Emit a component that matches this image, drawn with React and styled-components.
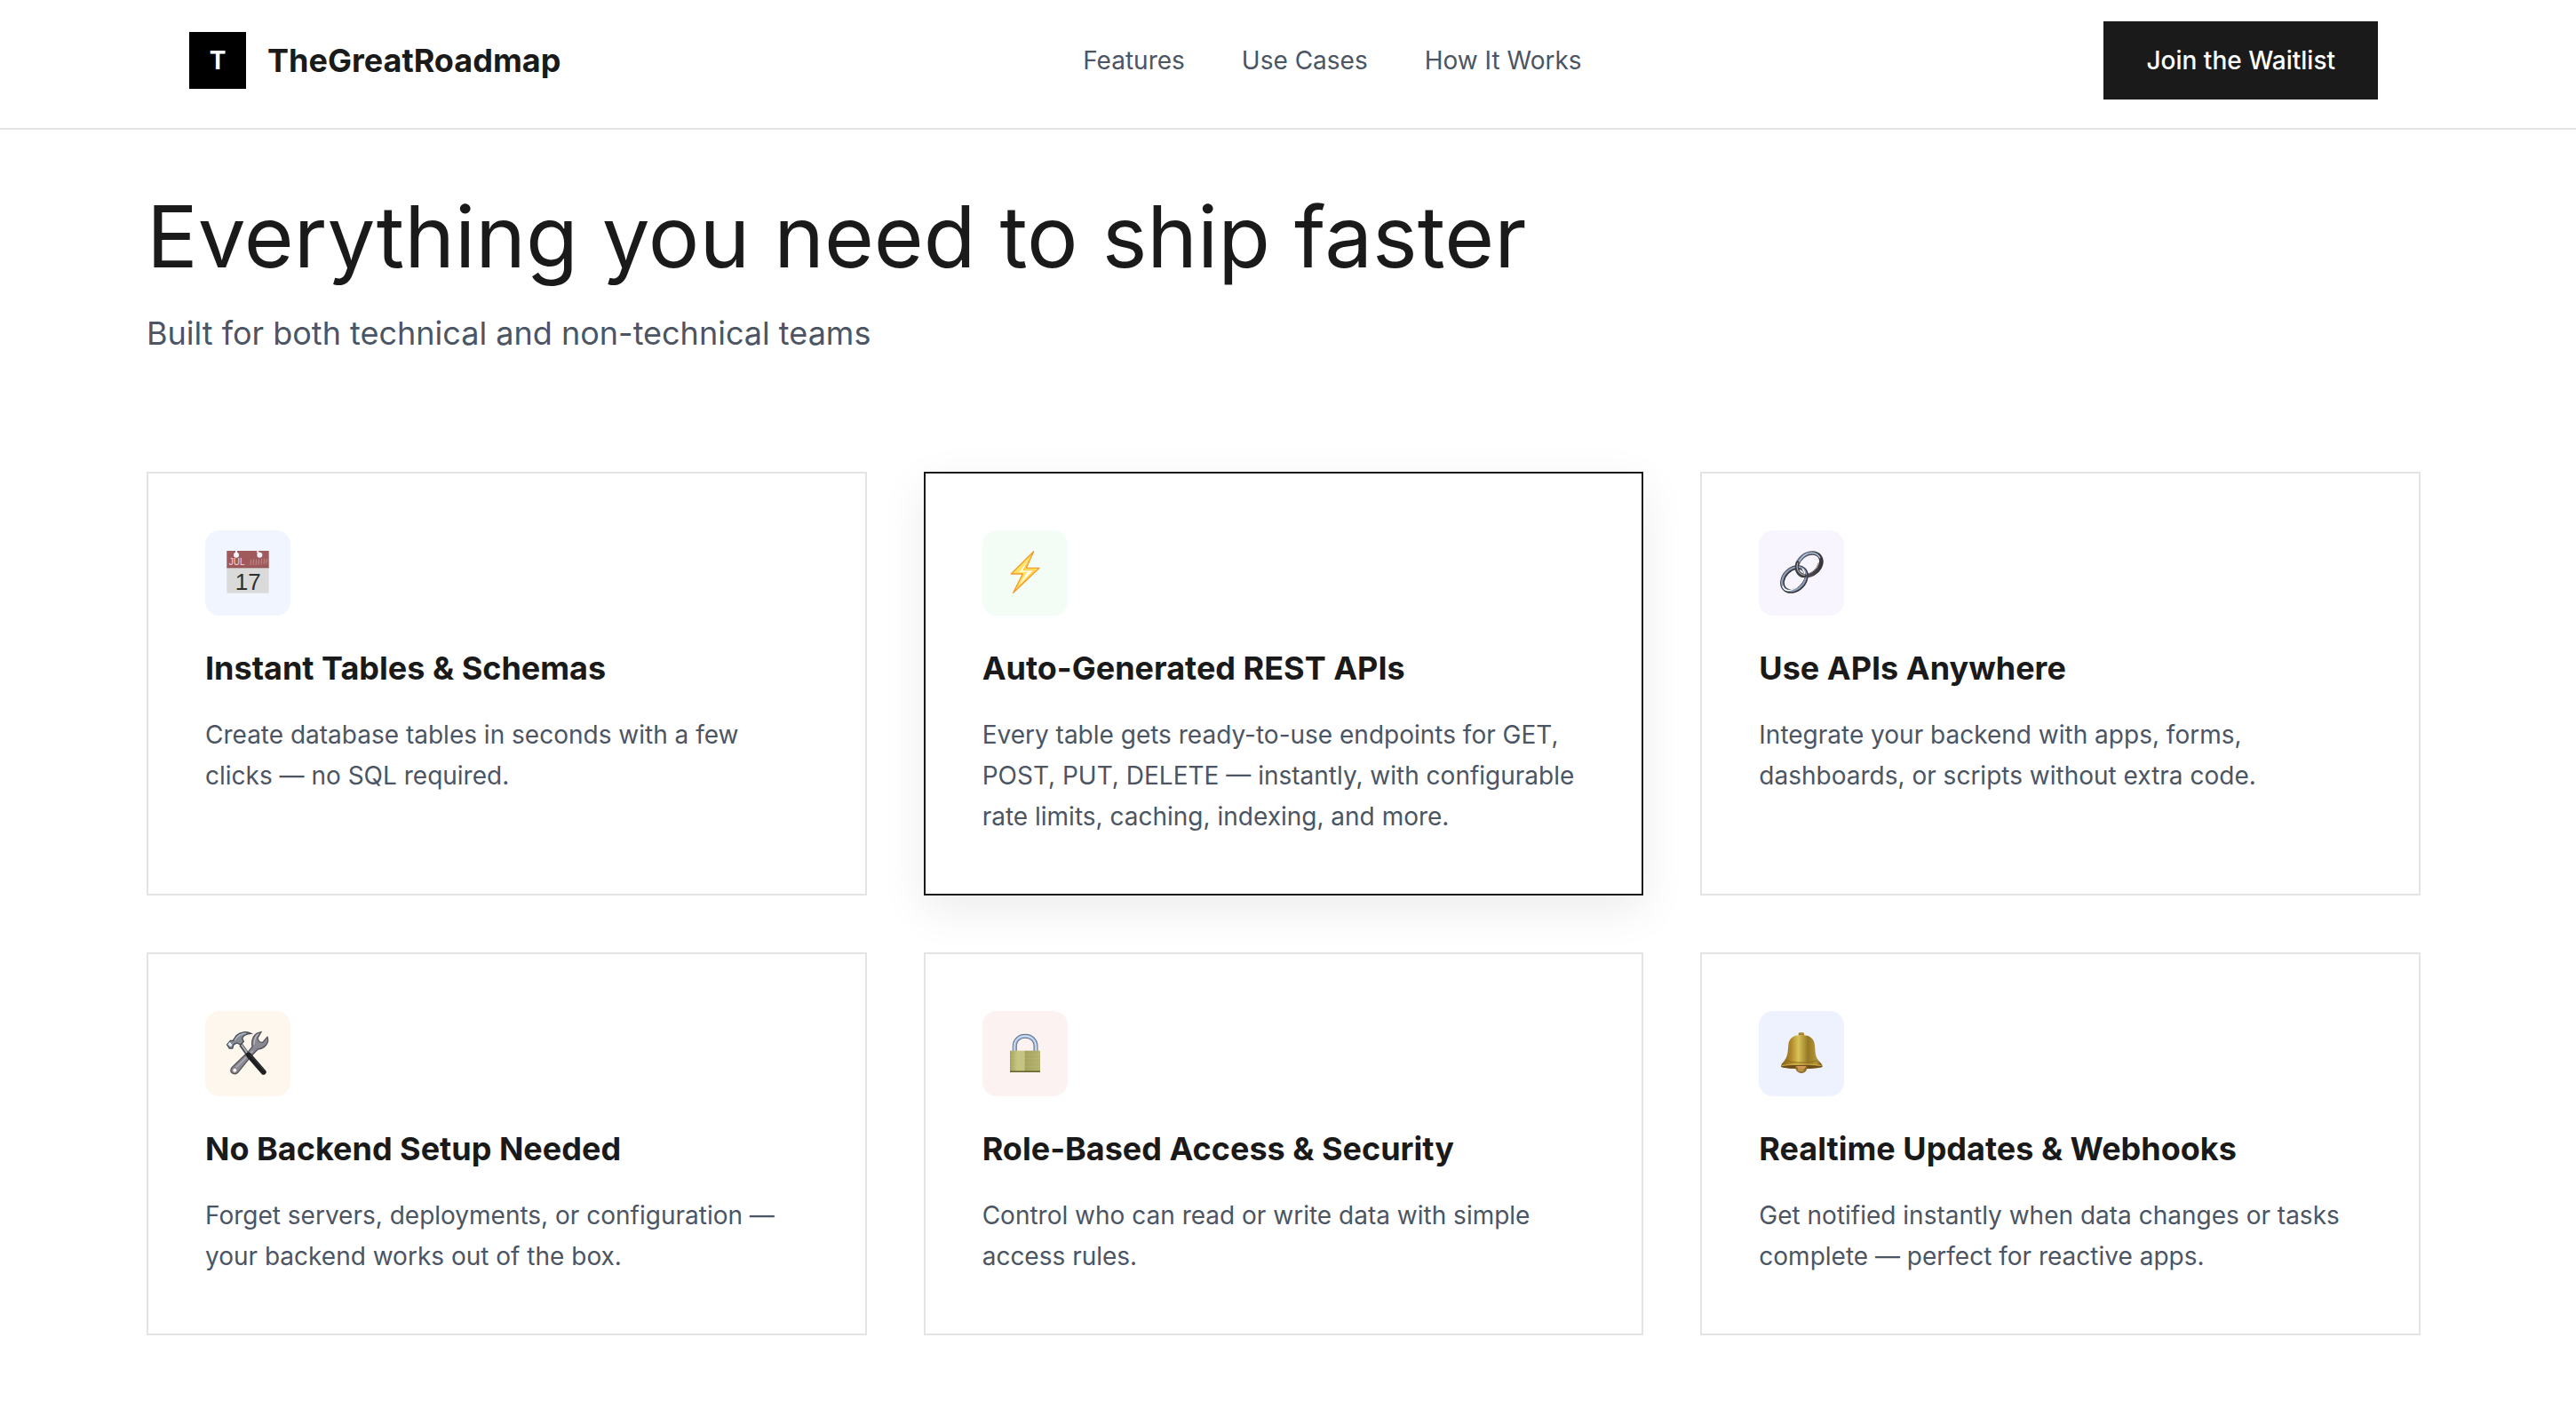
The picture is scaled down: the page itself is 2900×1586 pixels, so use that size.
import styled, { createGlobalStyle } from "styled-components";

const GlobalStyle = createGlobalStyle`
  :root {
    --color-text: #1a1a1a;
    --color-text-light: #4b5563;
    --color-border: #e4e4e4;
    --fs-md: 28px;
    --fs-lg: 36px;
    --fs-xxl: 96px;
  }

  * {
    box-sizing: border-box;
  }

  body {
    margin: 0;
    padding-right: 10px;
    background-color: #fff;
    color: var(--color-text);
    font-family: Inter, "Liberation Sans", sans-serif;
  }
`;

const StyledHeader = styled.header`
  margin-right: -10px;
  padding: 24px 10px 32px 0;
  border-bottom: 2px solid var(--color-border);

  .inner {
    display: flex;
    align-items: center;
    justify-content: space-between;
    max-width: 2560px;
    margin: 0 auto;
    padding: 0 48px;
  }
`;

const Brand = styled.a`
  display: flex;
  align-items: center;
  gap: 24px;
  color: var(--color-text);
  font-size: var(--fs-lg);
  font-weight: 700;
  line-height: 56px;
  text-decoration: none;
`;

const BrandMark = styled.span`
  display: flex;
  align-items: center;
  justify-content: center;
  width: 64px;
  height: 64px;
  background-color: #000;
  color: #fff;
  font-size: var(--fs-md);
`;

const Nav = styled.nav`
  display: flex;
  gap: 64px;

  a {
    color: var(--color-text-light);
    font-size: var(--fs-md);
    line-height: 40px;
    text-decoration: none;
  }
`;

const WaitlistButton = styled.button`
  padding: 24px 48px;
  border: 0;
  background-color: var(--color-text);
  color: #fff;
  font-family: inherit;
  font-size: var(--fs-md);
  font-weight: 500;
  line-height: 40px;
  cursor: pointer;
`;

const Features = styled.main`
  max-width: 2560px;
  margin: 0 auto;
  padding: 71px 0 80px;
`;

const Title = styled.h1`
  margin: 0 0 32px;
  font-size: var(--fs-xxl);
  font-weight: 400;
  line-height: 98px;
`;

const Subtitle = styled.p`
  margin: 0 0 128px;
  color: var(--color-text-light);
  font-size: var(--fs-lg);
  line-height: 56px;
`;

const CardGrid = styled.ul`
  display: grid;
  grid-template-columns: repeat(3, 1fr);
  gap: 64px;
  margin: 0;
  padding: 0;
  list-style: none;
`;

const StyledCard = styled.li`
  padding: 64px;
  border: 2px solid
    ${({ $active }) => ($active ? "var(--color-text)" : "var(--color-border)")};
  background-color: #fff;
  box-shadow: ${({ $active }) =>
    $active ? "0 16px 48px rgba(0, 0, 0, 0.08)" : "none"};

  h3 {
    margin: 32px 0 24px;
    font-size: var(--fs-lg);
    font-weight: 700;
    line-height: 55px;
  }

  p {
    margin: 0;
    color: var(--color-text-light);
    font-size: var(--fs-md);
    line-height: 46px;
  }
`;

const IconTile = styled.div`
  display: flex;
  align-items: center;
  justify-content: center;
  width: 96px;
  height: 96px;
  padding-bottom: 2px;
  border-radius: 16px;
  background-color: ${({ $tint }) => $tint};

  svg {
    width: 48px;
    height: 48px;
    overflow: visible;
  }
`;

function CalendarIcon() {
  return (
    <svg viewBox="0 0 144 144" aria-hidden="true">
      <rect x="1" width="142" height="143" fill="#dadada" />
      <rect x="1" width="142" height="57" fill="#a15a5b" />
      <rect x="1" y="55" width="142" height="3" fill="#8d4c4d" />
      <path d="M33 14V0M111 14c-2-6-4-10-8-13" stroke="#f4f6fb" strokeWidth="6" />
      <circle cx="33" cy="14" r="9" fill="#f4f6fb" />
      <circle cx="112" cy="14" r="9" fill="#f4f6fb" />
      <path
        d="M81 48l2-17M90 48l2-19M99 48l2-19M108 47l2-19M117 46l2-19M126 45l2-18M134 43l2-16"
        stroke="#c08b8c"
        strokeWidth="3"
      />
      <g fontFamily="Liberation Sans, sans-serif">
        <text x="8" y="48" fontSize="30" fill="#ecd9da">
          JUL
        </text>
        <text x="73" y="131" fontSize="78" fill="#2f2f2f" textAnchor="middle">
          17
        </text>
      </g>
    </svg>
  );
}

function BoltIcon() {
  return (
    <svg viewBox="0 0 144 144" aria-hidden="true">
      <path
        d="M101 2L76 58H120L32 142L64 78H25Z"
        fill="#ffe263"
        stroke="#f39c2b"
        strokeWidth="4"
        strokeLinejoin="round"
      />
      <path d="M90 23L52 71H79L49 121L101 65H65Z" fill="#fffbe0" />
      <path
        d="M90 23L66 65H104L49 121"
        fill="none"
        stroke="#ffc62f"
        strokeWidth="3"
      />
    </svg>
  );
}

function LinkIcon() {
  return (
    <svg viewBox="0 0 144 144" aria-hidden="true">
      <defs>
        <linearGradient id="steel" x1="0" y1="0" x2="1" y2="1">
          <stop offset="0" stopColor="#6f7f98" />
          <stop offset="0.5" stopColor="#55555c" />
          <stop offset="1" stopColor="#2e282a" />
        </linearGradient>
      </defs>
      <g fill="none" strokeLinecap="round">
        <ellipse cx="98" cy="46" rx="45" ry="34" transform="rotate(-38 98 46)" stroke="url(#steel)" strokeWidth="14" />
        <path d="M60 61C56 34 82 6 108 7C120 8 130 14 134 23" stroke="#b9d3f3" strokeWidth="4" />
        <path d="M76 76C92 85 122 70 130 40" stroke="#95847f" strokeWidth="3" />
        <ellipse cx="48" cy="96" rx="46" ry="34" transform="rotate(-45 48 96)" stroke="#35353b" strokeWidth="14" />
        <ellipse cx="47" cy="95" rx="46" ry="34" transform="rotate(-45 47 95)" stroke="#8b9cb8" strokeWidth="7" />
        <path d="M9 120C16 144 52 134 72 107C84 91 86 71 76 62" stroke="#fff" strokeWidth="4" />
        <path d="M59 40C52 61 60 84 84 85" stroke="#3f3c42" strokeWidth="12" />
        <path d="M59 42C54 62 62 79 82 82" stroke="#a0a4ae" strokeWidth="4" />
      </g>
    </svg>
  );
}

function ToolsIcon() {
  return (
    <svg viewBox="0 0 144 144" aria-hidden="true">
      <path
        d="M18 122L72 70L87 52C82 26 94 5 117 2L106 21C105 30 111 38 122 37L138 19C146 38 129 58 106 60L86 80L38 139C30 147 12 143 15 128Z"
        fill="#8a8890"
        stroke="#56555c"
        strokeWidth="4"
      />
      <path d="M32 122L88 66" stroke="#aaa8b1" strokeWidth="5" />
      <path d="M93 44C94 27 99 14 107 9" stroke="#b9bfc8" strokeWidth="4" fill="none" />
      <circle cx="28" cy="131" r="6" fill="#fff7ed" />
      <path d="M48 44L72 78" stroke="#4b4e55" strokeWidth="13" />
      <path d="M50 44L73 77" stroke="#b4b8c0" strokeWidth="5" />
      <path d="M74 79L125 137" stroke="#1f1f21" strokeWidth="18" strokeLinecap="round" />
      <path d="M79 78L128 132" stroke="#3f3f43" strokeWidth="3" />
      <path
        d="M2 45L13 31L22 31L33 14C48 1 68-1 83 7C67 8 57 13 53 23L58 34L48 45L35 39L24 45L20 57L10 57Z"
        fill="#858a94"
        stroke="#474a52"
        strokeWidth="4"
      />
      <path d="M28 30C36 15 50 7 66 6" stroke="#aeb6c1" strokeWidth="4" fill="none" />
      <path d="M4 44L11 35L19 45L15 52Z" fill="#dcecfb" />
    </svg>
  );
}

function LockIcon() {
  return (
    <svg viewBox="0 0 144 144" aria-hidden="true">
      <defs>
        <linearGradient id="brass">
          <stop offset="0" stopColor="#a5a25a" />
          <stop offset="0.25" stopColor="#c8c682" />
          <stop offset="0.48" stopColor="#c4c282" />
          <stop offset="0.5" stopColor="#a5a25f" />
          <stop offset="1" stopColor="#b5b36f" />
        </linearGradient>
      </defs>
      <g fill="none">
        <path d="M37 67V50C37 4 108 4 108 50V67" stroke="#667180" strokeWidth="15" />
        <path d="M37 67V50C37 4 108 4 108 50V67" stroke="#a1bee8" strokeWidth="9" />
        <path d="M35 67V50C37 4 106 4 109 50V67" stroke="#e4f0ff" strokeWidth="3" />
      </g>
      <rect x="21" y="65" width="102" height="73" fill="url(#brass)" />
      <path d="M21 79H123M21 92H123M21 105H123M21 118H123" stroke="#d2d093" strokeWidth="2" opacity="0.3" />
      <rect x="21" y="133" width="102" height="5" fill="#6b682e" />
    </svg>
  );
}

function BellIcon() {
  return (
    <svg viewBox="0 0 144 144" aria-hidden="true">
      <defs>
        <linearGradient id="gold">
          <stop offset="0" stopColor="#7d5c1c" />
          <stop offset="0.25" stopColor="#b28a2c" />
          <stop offset="0.42" stopColor="#d9c257" />
          <stop offset="0.65" stopColor="#967824" />
          <stop offset="0.85" stopColor="#b39738" />
          <stop offset="1" stopColor="#654a16" />
        </linearGradient>
      </defs>
      <rect x="62" y="4" width="19" height="13" rx="4" fill="#a8852c" />
      <path
        d="M71 12C42 12 30 25 28 46C26 72 25 87 13 101C6 108 3 112 3 120C25 129 118 129 143 120C143 112 139 107 132 101C119 88 119 72 117 46C115 25 102 12 71 12Z"
        fill="url(#gold)"
      />
      <path d="M20 98C45 108 99 108 125 98" stroke="#8f6c20" strokeWidth="3" fill="none" />
      <path d="M4 119C25 111 118 111 142 119C117 128 27 128 4 119Z" fill="#6c4d1b" />
      <path d="M5 116C28 109 117 109 140 116" stroke="#cfae43" strokeWidth="3" fill="none" />
      <path d="M51 117H92C93 149 51 149 51 117Z" fill="#8f6b2a" />
      <path d="M54 117H88L82 126H62Z" fill="#d79b59" />
      <ellipse cx="70" cy="130" rx="11" ry="6" fill="#b9933f" />
    </svg>
  );
}

const navLinks = [
  { label: "Features", href: "#features" },
  { label: "Use Cases", href: "#use-cases" },
  { label: "How It Works", href: "#how-it-works" },
];

const features = [
  {
    title: "Instant Tables & Schemas",
    description:
      "Create database tables in seconds with a few clicks — no SQL required.",
    icon: <CalendarIcon />,
    tint: "#f0f5ff",
  },
  {
    title: "Auto-Generated REST APIs",
    description:
      "Every table gets ready-to-use endpoints for GET, POST, PUT, DELETE — instantly, with configurable rate limits, caching, indexing, and more.",
    icon: <BoltIcon />,
    tint: "#f3fdf6",
    active: true,
  },
  {
    title: "Use APIs Anywhere",
    description:
      "Integrate your backend with apps, forms, dashboards, or scripts without extra code.",
    icon: <LinkIcon />,
    tint: "#f8f5ff",
  },
  {
    title: "No Backend Setup Needed",
    description:
      "Forget servers, deployments, or configuration — your backend works out of the box.",
    icon: <ToolsIcon />,
    tint: "#fef7ee",
  },
  {
    title: "Role-Based Access & Security",
    description: "Control who can read or write data with simple access rules.",
    icon: <LockIcon />,
    tint: "#fcf2f2",
  },
  {
    title: "Realtime Updates & Webhooks",
    description:
      "Get notified instantly when data changes or tasks complete — perfect for reactive apps.",
    icon: <BellIcon />,
    tint: "#eef2ff",
  },
];

function Header() {
  return (
    <StyledHeader>
      <div className="inner">
        <Brand href="#top">
          <BrandMark>T</BrandMark>
          TheGreatRoadmap
        </Brand>
        <Nav>
          {navLinks.map(({ label, href }) => (
            <a key={href} href={href}>
              {label}
            </a>
          ))}
        </Nav>
        <WaitlistButton type="button">Join the Waitlist</WaitlistButton>
      </div>
    </StyledHeader>
  );
}

function FeatureCard({ feature }) {
  const { title, description, icon, tint, active } = feature;

  return (
    <StyledCard $active={active}>
      <IconTile $tint={tint}>{icon}</IconTile>
      <h3>{title}</h3>
      <p>{description}</p>
    </StyledCard>
  );
}

function App() {
  return (
    <>
      <GlobalStyle />
      <Header />
      <Features id="features">
        <Title>Everything you need to ship faster</Title>
        <Subtitle>Built for both technical and non-technical teams</Subtitle>
        <CardGrid>
          {features.map((feature) => (
            <FeatureCard key={feature.title} feature={feature} />
          ))}
        </CardGrid>
      </Features>
    </>
  );
}

export default App;
